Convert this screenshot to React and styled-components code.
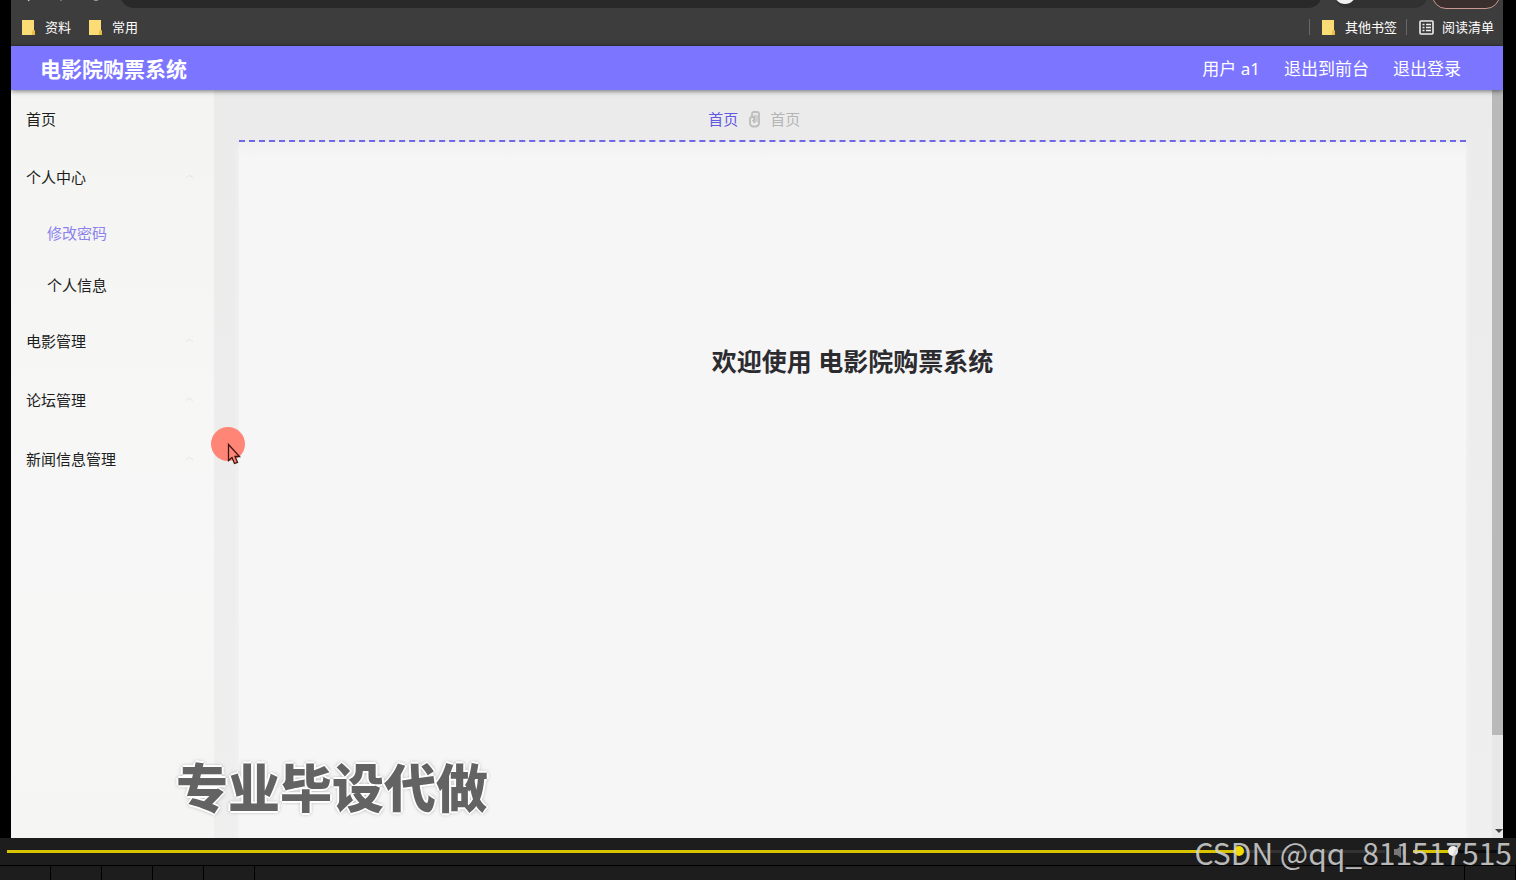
import { useState } from 'react';
import styled, { createGlobalStyle } from 'styled-components';

const GlobalStyle = createGlobalStyle`
  * {
    box-sizing: border-box;
  }

  body {
    margin: 0;
    background: #000;
    font-family: "Noto Sans", "Noto Sans CJK SC", sans-serif;
  }

  button,
  input {
    font: inherit;
    margin: 0;
    padding: 0;
    border: 0;
    background: none;
  }

  a {
    color: inherit;
    text-decoration: none;
  }

  ul {
    list-style: none;
    margin: 0;
    padding: 0;
  }
`;

const Screen = styled.div`
  position: relative;
  display: flex;
  flex-direction: column;
  min-height: 100vh;
  overflow: hidden;
`;

const Browser = styled.div`
  flex: 1;
  display: flex;
  flex-direction: column;
  margin: 0 13px 0 11px;
  background: #3e3d3d;
`;

const Toolbar = styled.div`
  display: flex;
  align-items: flex-end;
  height: 9px;
  padding-right: 3px;
  overflow: hidden;

  svg {
    display: block;
    flex: none;
  }
`;

const AddressBar = styled.div`
  flex: 1;
  height: 28px;
  margin-bottom: 1px;
  border-radius: 14px;
  background: #2a292a;
`;

const Profile = styled.div`
  display: flex;
  align-items: center;
  width: 94px;
  height: 28px;
  margin: 0 4px 1px 12px;
  border-radius: 14px;
  background: #323131;

  &::before {
    content: "";
    width: 22px;
    height: 22px;
    margin-bottom: 2px;
    border-radius: 50%;
    background: #f1f1f1;
  }
`;

const UpdatePill = styled.div`
  width: 68px;
  height: 28px;
  border: 1px solid #c99a92;
  border-radius: 14px;
  background: #3a2f2d;
`;

const Bookmarks = styled.nav`
  display: flex;
  align-items: center;
  height: 37px;
  padding: 0 9px 0 11px;
  border-bottom: 1px solid #353535;
  color: #fff;
  font-size: 13px;
  line-height: 20px;
`;

const Bookmark = styled.a`
  display: flex;
  align-items: center;
  gap: ${(props) => (props.$tight ? 8 : 10)}px;
  margin-right: ${(props) => props.$after ?? 18}px;

  svg {
    display: block;
  }
`;

const Divider = styled.span`
  width: 1px;
  height: 16px;
  margin-right: 12px;
  background: #676767;
`;

const PinnedBookmarks = styled.div`
  display: flex;
  align-items: center;
  margin-left: auto;
`;

const Header = styled.header`
  position: relative;
  z-index: 1;
  display: flex;
  align-items: center;
  justify-content: space-between;
  height: 44px;
  padding: 2px 42px 0 29px;
  background: #7c75ff;
  box-shadow: 0 1px 5px rgba(0, 0, 0, 0.55);
  color: #fff;
`;

const Brand = styled.h1`
  margin: 0;
  font-size: 21px;
  line-height: 28px;
  font-weight: 700;
`;

const UserNav = styled.nav`
  display: flex;
  gap: 24px;
  font-size: 17px;
  line-height: 24px;
`;

const Body = styled.div`
  flex: 1;
  display: flex;
`;

const Sidebar = styled.aside`
  width: 203px;
  background: linear-gradient(#f4f5f2, #f7f7f7 60%, #f5f6f3);
  color: #1d1d1d;
  font-size: 15px;
`;

const MenuItem = styled.a`
  display: flex;
  align-items: center;
  justify-content: space-between;
  height: ${(props) => (props.$home ? 57 : 59)}px;
  padding: 0 20px 0 15px;
`;

const SubMenu = styled.ul`
  padding-bottom: 1px;
`;

const SubItem = styled.a`
  display: flex;
  align-items: center;
  height: 52px;
  padding-left: 36px;
  color: ${(props) => (props.$active ? '#8b82ec' : 'inherit')};
`;

const Main = styled.main`
  flex: 1;
  display: flex;
  flex-direction: column;
  padding: 0 26px 0 25px;
  background: linear-gradient(#ebebeb, #efefef);
`;

const Breadcrumb = styled.nav`
  display: flex;
  align-items: center;
  justify-content: center;
  gap: 8px;
  height: 52px;
  padding: 8px 16% 0 0;
  border-bottom: 2px dashed #6d64e6;
  color: #b5b5b5;
  font-size: 15px;
  line-height: 22px;

  a {
    color: #6259e2;
  }
`;

const Panel = styled.section`
  flex: 1;
  background: linear-gradient(#f1f1f1, #f6f6f6 16px);
  box-shadow: 0 4px 5px #f6f6f6;
  text-align: center;
`;

const Welcome = styled.h2`
  margin: 201px 0 0;
  color: #2c2c30;
  font-size: 25px;
  line-height: 36px;
  font-weight: 700;
`;

const Scrollbar = styled.div`
  display: flex;
  flex-direction: column;
  align-items: flex-end;
  justify-content: space-between;
  width: 11px;
  background: #e8e8e8;

  svg {
    display: block;
    margin-bottom: 3px;
  }
`;

const Thumb = styled.div`
  width: 100%;
  height: 645px;
  background: #b9b9b9;
`;

const Player = styled.footer`
  background: #1d1d1d;
`;

const Controls = styled.div`
  display: flex;
  align-items: center;
  height: 28px;
  padding: 0 13px 0 7px;
  border-bottom: 1px solid #000;

  button {
    display: flex;
    margin: 0 6px 0 8px;
  }
`;

const Slider = styled.input.attrs({ type: 'range' })`
  appearance: none;
  flex: ${(props) => (props.$width ? 'none' : 1)};
  width: ${(props) => (props.$width ? `${props.$width}px` : 'auto')};
  min-width: 0;
  height: 12px;

  &::-webkit-slider-runnable-track {
    height: 3px;
    background: linear-gradient(
      to right,
      #d9c400 ${(props) => props.value / 10}%,
      ${(props) => props.$rest} ${(props) => props.value / 10}%
    );
  }

  &::-webkit-slider-thumb {
    appearance: none;
    width: 10px;
    height: 10px;
    margin-top: -4px;
    border-radius: 50%;
    background: ${(props) => props.$knob};
  }
`;

const Slots = styled.div`
  display: flex;
  height: 14px;
`;

const Slot = styled.div`
  width: 51px;
  border-right: 1px solid #000;
`;

const LastSlot = styled.div`
  width: 52px;
  margin-left: auto;
  border: solid #000;
  border-width: 0 1px;
`;

const Caption = styled.div`
  position: absolute;
  left: 176px;
  bottom: 56px;
  color: #636363;
  font-family: "Noto Sans CJK SC", sans-serif;
  font-size: 52px;
  line-height: 76px;
  font-weight: 900;
  text-shadow: 2px 0 #fff, -2px 0 #fff, 0 2px #fff, 0 -2px #fff, 0 0 4px #555;
`;

const Watermark = styled.div`
  position: absolute;
  right: 4px;
  bottom: 6px;
  color: rgba(214, 214, 214, 0.85);
  font-family: "Noto Sans CJK SC", sans-serif;
  font-size: 30px;
  line-height: 44px;
  pointer-events: none;
`;

const Pointer = styled.svg`
  position: absolute;
  left: 211px;
  top: 427px;
  pointer-events: none;
`;

const FolderIcon = () => (
  <svg width="13" height="15" viewBox="0 0 13 15" aria-hidden="true">
    <path d="M0 0h12v10l1 1v4H0z" fill="#fbdc75" />
    <path d="M10 15v-3l1-2 2 1v4z" fill="#e8bd43" />
  </svg>
);

const ReadingListIcon = () => (
  <svg width="15" height="15" viewBox="0 0 15 15" fill="none" stroke="#eee" aria-hidden="true">
    <rect x="1" y="1" width="13" height="13" rx="1" strokeWidth="1.6" />
    <path d="M3.5 4.5h2M7 4.5h5M3.5 7.5h2M7 7.5h5M3.5 10.5h2M7 10.5h5" strokeWidth="1.3" />
  </svg>
);

const Caret = () => (
  <svg width="9" height="5" viewBox="0 0 9 5" fill="none" stroke="#e6e7e5" aria-hidden="true">
    <path d="M1 3.5l3.5-2L8 3.5" />
  </svg>
);

const SeparatorIcon = () => (
  <svg width="16" height="18" viewBox="0 0 16 18" fill="none" stroke="#bdbdbd" aria-hidden="true">
    <path d="M6 7V3.5Q6 2 8 2h3q2 0 2 2v9q0 3-3 3.5H7q-3-.5-3-3V9q0-2 2-2h2v6" strokeWidth="1.8" />
    <path d="M9 4.5v8M6 10.5h3M11 5v7" strokeWidth="1.2" />
  </svg>
);

const menu = [
  { label: '首页', home: true },
  {
    label: '个人中心',
    children: [{ label: '修改密码', active: true }, { label: '个人信息' }],
  },
  { label: '电影管理' },
  { label: '论坛管理' },
  { label: '新闻信息管理' },
];

const App = () => {
  const [position, setPosition] = useState(897);
  const [volume, setVolume] = useState(440);

  return (
    <Screen>
      <GlobalStyle />
      <Browser>
        <Toolbar>
          <svg width="109" height="9" viewBox="0 0 109 9" stroke="#c8c8c8" strokeWidth="1.5" fill="none" aria-hidden="true">
            <path d="M17-1l1 2M50-1v1.5M81-2q4 4 8 0" />
          </svg>
          <AddressBar />
          <Profile />
          <UpdatePill />
        </Toolbar>
        <Bookmarks aria-label="书签">
          <Bookmark href="#files"><FolderIcon />资料</Bookmark>
          <Bookmark href="#common"><FolderIcon />常用</Bookmark>
          <PinnedBookmarks>
            <Divider />
            <Bookmark href="#other" $after={9}><FolderIcon />其他书签</Bookmark>
            <Divider />
            <Bookmark href="#reading" $tight $after={0}><ReadingListIcon />阅读清单</Bookmark>
          </PinnedBookmarks>
        </Bookmarks>

        <Header>
          <Brand>电影院购票系统</Brand>
          <UserNav>
            <span>用户 a1</span>
            <a href="#front">退出到前台</a>
            <a href="#logout">退出登录</a>
          </UserNav>
        </Header>

        <Body>
          <Sidebar>
            <ul>
              {menu.map((item) => (
                <li key={item.label}>
                  <MenuItem href="#menu" $home={item.home}>
                    {item.label}
                    {!item.home && <Caret />}
                  </MenuItem>
                  {item.children && (
                    <SubMenu>
                      {item.children.map((child) => (
                        <li key={child.label}>
                          <SubItem href="#sub" $active={child.active}>{child.label}</SubItem>
                        </li>
                      ))}
                    </SubMenu>
                  )}
                </li>
              ))}
            </ul>
          </Sidebar>
          <Main>
            <Breadcrumb aria-label="面包屑">
              <a href="#home">首页</a>
              <SeparatorIcon />
              <span>首页</span>
            </Breadcrumb>
            <Panel>
              <Welcome>欢迎使用 电影院购票系统</Welcome>
            </Panel>
          </Main>
          <Scrollbar>
            <Thumb />
            <svg width="9" height="7" viewBox="0 0 9 7" aria-hidden="true">
              <path d="M1 1h8L5 5z" fill="#444" />
            </svg>
          </Scrollbar>
        </Body>
      </Browser>

      <Player>
        <Controls>
          <Slider
            aria-label="播放进度"
            max="1000"
            value={position}
            onChange={(e) => setPosition(Number(e.target.value))}
            $rest="#333"
            $knob="#f5dc00"
          />
          <button type="button" aria-label="音量">
            <svg width="14" height="14" viewBox="0 0 14 14" aria-hidden="true">
              <path d="M1 4h3l4-3v12l-4-3H1z" fill="#777" />
              <path d="M10 4v6M12 5v4" stroke="#555" />
            </svg>
          </button>
          <Slider
            aria-label="音量大小"
            max="1000"
            value={volume}
            onChange={(e) => setVolume(Number(e.target.value))}
            $width={90}
            $rest="#0c0c0c"
            $knob="#f2f2f2"
          />
        </Controls>
        <Slots>
          {[...Array(5)].map((_, index) => (
            <Slot key={index} />
          ))}
          <LastSlot />
        </Slots>
      </Player>

      <Caption>专业毕设代做</Caption>
      <Watermark>CSDN @qq_811517515</Watermark>
      <Pointer width="34" height="40" viewBox="0 0 34 40" aria-hidden="true">
        <circle cx="17" cy="17" r="17" fill="#ff8577" />
        <path
          d="M17.5 17.5v16l3.5-3 2.5 6 3-1.2-2.5-5.800h4.5z"
          fill="#ff8577"
          stroke="#3a1512"
          strokeWidth="1.3"
        />
      </Pointer>
    </Screen>
  );
};

export default App;
